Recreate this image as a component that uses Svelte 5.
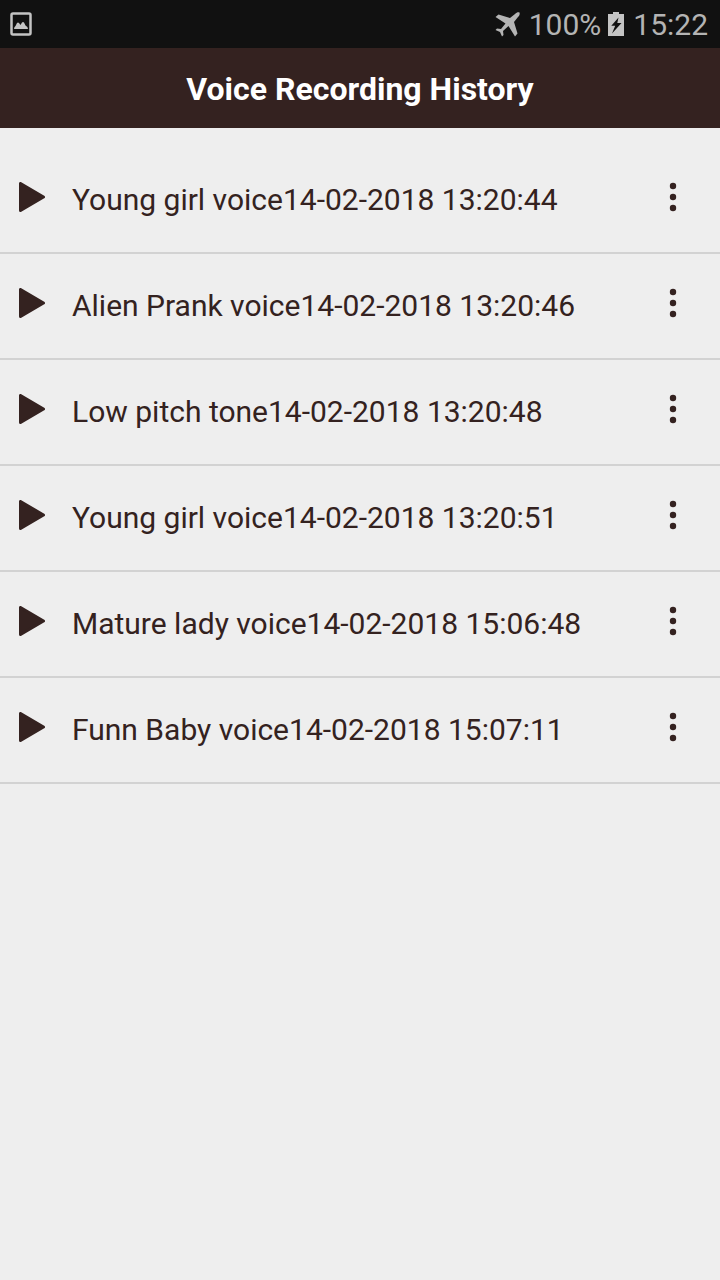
<script lang="ts">
    let recordings = [
        "Young girl voice14-02-2018 13:20:44",
        "Alien Prank voice14-02-2018 13:20:46",
        "Low pitch tone14-02-2018 13:20:48",
        "Young girl voice14-02-2018 13:20:51",
        "Mature lady voice14-02-2018 15:06:48",
        "Funn Baby voice14-02-2018 15:07:11",
    ];
</script>

<div class="screen">
    <div class="status-bar">
        <svg class="picture" viewBox="0 0 22 24" width="22" height="24">
            <rect x="1.5" y="1.5" width="19" height="21" rx="1.5" />
            <path d="M4 17q0-2 1.500-3l1.500-3q1-1 2 0l1.500 2 1.500-2.500q1-1 2 0l1.500 3q2.500 1 2.500 3.500z" />
        </svg>
        <div class="status-right">
            <svg class="plane" viewBox="0 0 25 25" width="25" height="25">
                <path
                    d="M24.500 .5C23 0 21.500 .5 20 2L15 6 3.500 2.500 .5 5l10 6.500L6 17l-4-.5L.5 18 5 20l2 4.500L8.500 23 8 19l5.500-5L20 24.500l2.500-3L19 10l4-5c1.500-1.500 2-3 1.500-4.500z"
                />
            </svg>
            <span>100%</span>
            <svg class="battery" viewBox="0 0 16 24" width="16" height="24">
                <path
                    fill-rule="evenodd"
                    d="M5 0h6v2h5v22H0V2h5zM10.500 5.500L3.300 13.700h3.900L4 21.500 13.500 11H9.300z"
                />
            </svg>
            <span>15:22</span>
        </div>
    </div>

    <header>
        <h1>Voice Recording History</h1>
    </header>

    <ul>
        {#each recordings as name}
            <li>
                <button class="play" aria-label="Play">
                    <svg viewBox="0 0 26 30" width="26" height="30">
                        <path d="M1.500 1.500v27L24.500 15z" />
                    </svg>
                </button>
                <span class="name">{name}</span>
                <button class="more" aria-label="More options">
                    <svg viewBox="0 0 8 30" width="8" height="30">
                        <circle cx="4" cy="4" r="3.200" />
                        <circle cx="4" cy="15" r="3.200" />
                        <circle cx="4" cy="26" r="3.200" />
                    </svg>
                </button>
            </li>
        {/each}
    </ul>
</div>

<style>
    :global(body) {
        background: #eeeeee;
    }

    .screen {
        font-family: Roboto, sans-serif;
        color: #342220;
    }

    .status-bar {
        display: flex;
        align-items: center;
        justify-content: space-between;
        height: 48px;
        padding: 0 12px 0 10px;
        background: #111111;
        color: #b4b4b4;
        font-size: 30px;
    }
    .status-bar svg {
        display: block;
        fill: #c4c4c4;
    }
    .status-bar .picture rect {
        fill: none;
        stroke: #c4c4c4;
        stroke-width: 2.5;
    }
    .status-right {
        display: flex;
        align-items: center;
    }
    .status-bar .plane {
        margin-right: 9px;
        fill: #b4b4b4;
    }
    .battery {
        margin: 0 9px 0 7px;
    }

    header {
        display: flex;
        align-items: center;
        justify-content: center;
        box-sizing: border-box;
        height: 80px;
        padding-top: 2px;
        background: #342220;
    }
    h1 {
        margin: 0;
        color: #ffffff;
        font-size: 32px;
        font-weight: 700;
        line-height: 40px;
    }

    ul {
        margin: 0;
        padding: 20px 0 0;
        list-style: none;
    }
    li {
        display: flex;
        align-items: center;
        height: 104px;
        border-bottom: 2px solid #d2d2d2;
    }
    button {
        padding: 0 0 6px;
        border: 0;
        background: none;
    }
    button svg {
        display: block;
        fill: #342220;
    }
    .play {
        margin: 0 27px 0 19px;
    }
    .play path {
        stroke: #342220;
        stroke-width: 3;
        stroke-linejoin: round;
    }
    .more {
        margin-right: 43px;
    }
    .name {
        flex: 1;
        font-size: 30px;
        line-height: 40px;
    }
</style>
